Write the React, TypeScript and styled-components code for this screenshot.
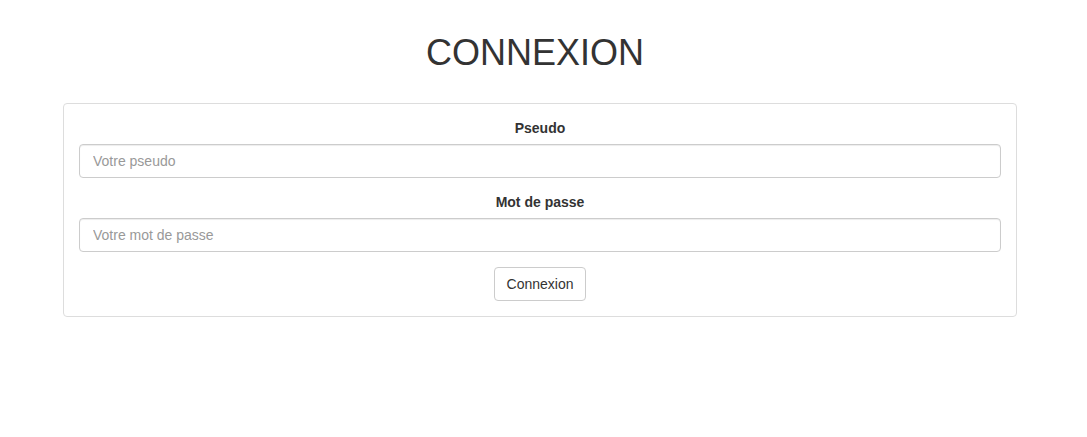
import styled, { createGlobalStyle } from "styled-components";

const GlobalStyle = createGlobalStyle`
  * {
    box-sizing: border-box;
  }
  body {
    margin: 0;
    background: #fff;
    color: #333;
    font-family: "Liberation Sans", Arial, sans-serif;
    font-size: 14px;
    line-height: 1.42857;
  }
`;

const Page = styled.div`
  padding: 0 70px 0 63px;
`;

const Title = styled.h1`
  margin: 33px 0 30px;
  padding-right: 10px;
  font-size: 36px;
  font-weight: 400;
  line-height: 40px;
  text-align: center;
  color: #333;
`;

const Panel = styled.form`
  border: 1px solid #ddd;
  border-radius: 4px;
  padding: 15px;
  display: flex;
  flex-direction: column;
  align-items: center;
`;

const FormGroup = styled.div`
  width: 100%;
  margin-bottom: 15px;
  text-align: center;
`;

const Label = styled.label`
  display: inline-block;
  margin-bottom: 5px;
  font-weight: 700;
  line-height: 19px;
  padding-bottom: 1px;
`;

const Input = styled.input`
  display: block;
  width: 100%;
  height: 34px;
  padding: 6px 12px 6px 13px;
  font-family: inherit;
  font-size: 14px;
  color: #555;
  background: #fff;
  border: 1px solid #ccc;
  border-radius: 4px;
  box-shadow: inset 0 1px 1px rgba(0, 0, 0, 0.075);
  outline: none;

  &::placeholder {
    color: #999;
  }
`;

const Button = styled.button`
  height: 34px;
  padding: 6px 12px;
  font-family: inherit;
  font-size: 14px;
  line-height: 20px;
  color: #333;
  background: #fff;
  border: 1px solid #ccc;
  border-radius: 4px;
  cursor: pointer;

  &:hover {
    background: #e6e6e6;
  }
`;

const App = () => {
  return (
    <Page>
      <GlobalStyle />
      <Title>CONNEXION</Title>
      <Panel onSubmit={(e) => e.preventDefault()}>
        <FormGroup>
          <Label htmlFor="pseudo">Pseudo</Label>
          <Input id="pseudo" type="text" placeholder="Votre pseudo" />
        </FormGroup>
        <FormGroup>
          <Label htmlFor="password">Mot de passe</Label>
          <Input id="password" type="password" placeholder="Votre mot de passe" />
        </FormGroup>
        <Button type="submit">Connexion</Button>
      </Panel>
    </Page>
  );
};

export default App;
